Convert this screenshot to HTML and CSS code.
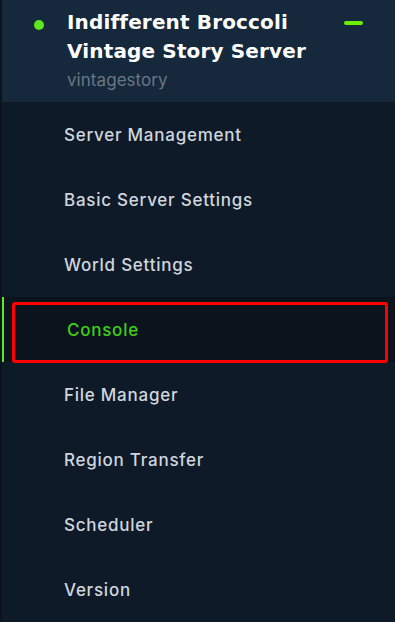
FILE: index.html
```html
<!DOCTYPE html>
<html>
<head>
<meta charset="utf-8">
<link rel="stylesheet" href="styles.css">
</head>
<body>
<aside class="sidebar">
  <header class="server">
    <span class="status-dot"></span>
    <div class="server-info">
      <div class="server-name">Indifferent Broccoli Vintage Story Server</div>
      <div class="server-game">vintagestory</div>
    </div>
    <span class="collapse"></span>
  </header>
  <nav class="nav">
    <a class="nav-item">Server Management</a>
    <a class="nav-item">Basic Server Settings</a>
    <a class="nav-item">World Settings</a>
    <a class="nav-item active">Console<span class="highlight"></span></a>
    <a class="nav-item">File Manager</a>
    <a class="nav-item">Region Transfer</a>
    <a class="nav-item">Scheduler</a>
    <a class="nav-item">Version</a>
  </nav>
</aside>
</body>
</html>
```
FILE: styles.css
```css
* { box-sizing: border-box; }
html, body { margin: 0; padding: 0; }
body {
  width: 395px;
  height: 622px;
  overflow: hidden;
  background: #0f1a28;
  font-family: Inter, "DejaVu Sans", sans-serif;
}
.sidebar {
  height: 622px;
  background: #0f1a28;
  border-left: 2px solid #0b131c;
  display: flex;
  flex-direction: column;
}
.server {
  height: 102px;
  background: #15283c;
  display: flex;
  align-items: flex-start;
  padding: 8px 0 0 32px;
  position: relative;
}
.status-dot {
  width: 10px;
  height: 10px;
  border-radius: 50%;
  background: #5de61e;
  margin-top: 12px;
  flex: none;
}
.server-info {
  margin-left: 23px;
  width: 270px;
}
.server-name {
  color: #ffffff;
  font-family: "DejaVu Sans", Inter, sans-serif;
  font-weight: 700;
  font-size: 20px;
  line-height: 29px;
  letter-spacing: 0.15px;
}
.server-game {
  color: #6b7684;
  font-size: 17px;
  line-height: 22px;
  margin-top: 3px;
  letter-spacing: 0.05px;
}
.collapse {
  width: 19px;
  height: 4px;
  border-radius: 2px;
  background: #6cf000;
  margin-top: 13px;
  margin-left: 7px;
  flex: none;
}
.nav {
  display: flex;
  flex-direction: column;
}
.nav-item {
  height: 65px;
  display: flex;
  align-items: center;
  padding-left: 62px;
  color: #cfd6de;
  font-size: 17px;
  font-weight: 500;
  letter-spacing: 0.75px;
  position: relative;
}
.nav-item.active {
  color: #3fcf1a;
  background: #0b131d;
  padding-left: 65px;
  box-shadow: inset 2px 0 0 #5fe81c;
}
.highlight {
  position: absolute;
  left: 10px;
  top: 5px;
  width: 376px;
  height: 61px;
  border: 3px solid #ff0000;
  border-radius: 3px;
}
```
